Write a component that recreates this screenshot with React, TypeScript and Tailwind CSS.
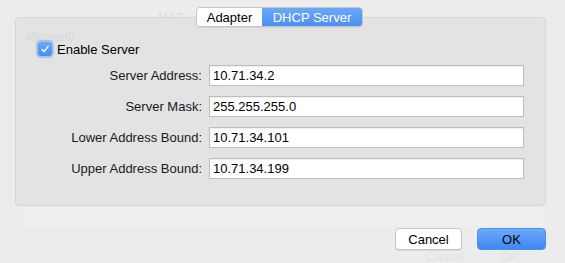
import React from 'react';

const fields = [
  { label: 'Server Address:', value: '10.71.34.2' },
  { label: 'Server Mask:', value: '255.255.255.0' },
  { label: 'Lower Address Bound:', value: '10.71.34.101' },
  { label: 'Upper Address Bound:', value: '10.71.34.199' },
];

export default function App() {
  return (
    <div
      className="relative w-[565px] h-[263px] overflow-hidden bg-[#ececec] text-[13px] text-black"
      style={{ fontFamily: '"Liberation Sans", Arial, sans-serif' }}
    >
      {/* faint sheet content showing through */}
      <span className="absolute left-[158px] top-[8px] text-[#dcdcdc]">NAT</span>
      <span className="absolute left-[26px] top-[31px] z-10 text-[12px] leading-none text-[#d8d8d8]">vboxnet0</span>
      <span className="absolute left-[425px] top-[250px] leading-none text-[#e2e2e2]">Cancel</span>
      <span className="absolute left-[500px] top-[250px] leading-none text-[#e2e2e2]">OK</span>

      <div className="relative flex flex-col pt-[7px]">
        {/* Tabs */}
        <div className="relative z-20 ml-[196px] flex h-[20px] w-[167px] overflow-hidden rounded-[4px] border border-[#c4c4c4] shadow-[0_1px_0_rgba(0,0,0,0.05)]">
          <div className="flex w-[65px] items-center justify-center bg-white leading-none">Adapter</div>
          <div className="flex flex-1 items-center justify-center bg-gradient-to-b from-[#6aa9f8] to-[#4c8ff3] leading-none text-white">
            DHCP Server
          </div>
        </div>

        {/* Tab panel */}
        <div className="-mt-[10px] ml-[15px] h-[189px] w-[531px] rounded-[4px] border border-[#d6d6d6] bg-[#e3e3e3] pt-[24px]">
          <div className="relative z-20 ml-[22px] flex items-center gap-[5px]">
            <div className="flex h-[14px] w-[14px] items-center justify-center rounded-[3px] bg-gradient-to-b from-[#6aa9f8] to-[#4a8df3] shadow-[0_0_0_2px_rgba(100,150,240,0.45)]">
              <svg width="10" height="10" viewBox="0 0 10 10" fill="none">
                <path d="M2 5.4 L4.1 7.6 L8.2 2.2" stroke="white" strokeWidth="1.4" strokeLinecap="round" strokeLinejoin="round" />
              </svg>
            </div>
            <span className="leading-none">Enable Server</span>
          </div>

          <div className="mt-[9px] grid grid-cols-[186px_315px] gap-x-[7px] gap-y-[10px]">
            {fields.map((f) => (
              <React.Fragment key={f.label}>
                <div className="flex items-center justify-end text-[#1a1a1a]">{f.label}</div>
                <div className="flex h-[21px] items-center border border-[#bdbdbd] bg-white pl-[3px] shadow-[inset_0_1px_0_rgba(0,0,0,0.06)]">
                  {f.value}
                </div>
              </React.Fragment>
            ))}
          </div>
        </div>

        <div className="ml-[23px] mt-[2px] h-[18px] w-[520px] bg-[#efefef]" />

        {/* Buttons */}
        <div className="mr-[19px] mt-[2px] flex justify-end gap-[15px]">
          <button className="h-[22px] w-[67px] rounded-[4px] border border-[#c6c6c6] bg-white leading-none shadow-[0_1px_0_rgba(0,0,0,0.08)]">
            Cancel
          </button>
          <button className="h-[22px] w-[69px] rounded-[4px] border border-[#4f8ef0] bg-gradient-to-b from-[#6cabf9] to-[#3f86f2] leading-none">
            OK
          </button>
        </div>
      </div>
    </div>
  );
}
